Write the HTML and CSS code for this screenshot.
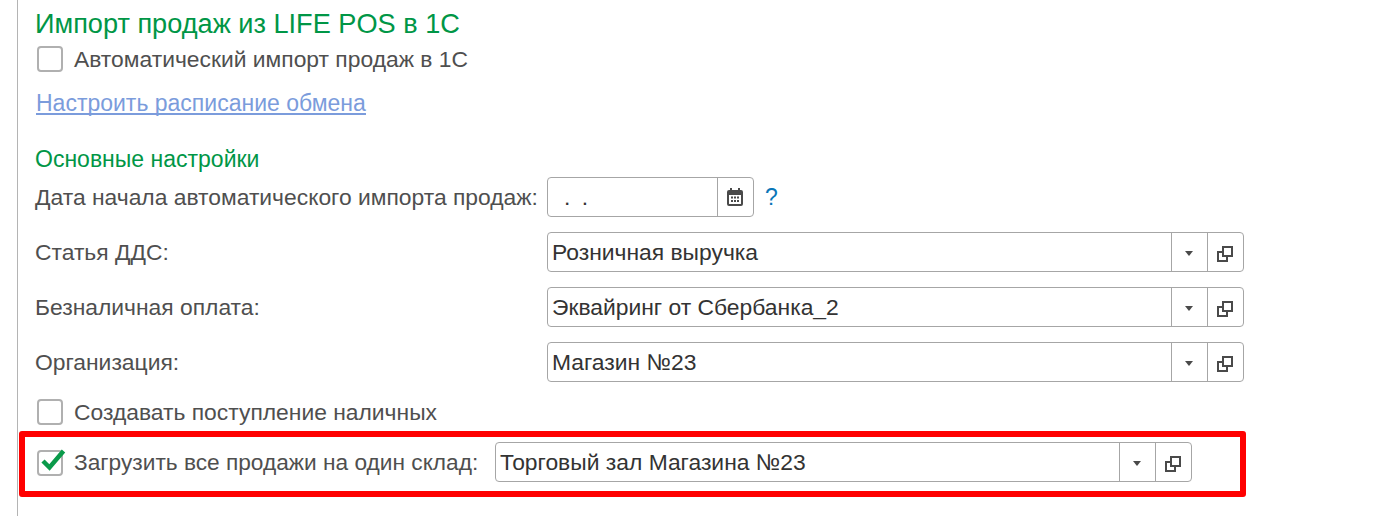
FILE: index.html
```html
<!DOCTYPE html>
<html lang="ru">
<head>
<meta charset="utf-8">
<title>Импорт продаж</title>
<link rel="stylesheet" href="styles.css">
</head>
<body>
<main class="form">
  <h1 class="title">Импорт продаж из LIFE POS в 1С</h1>
  <label class="check-row auto">
    <span class="box"></span>
    <span class="text">Автоматический импорт продаж в 1С</span>
  </label>
  <a class="link" href="#">Настроить расписание обмена</a>
  <h2 class="subtitle">Основные настройки</h2>

  <div class="row date-row">
    <span class="text">Дата начала автоматического импорта продаж:</span>
    <div class="field date-field">
      <span class="value date-value">. .</span>
      <span class="btn cal">
        <svg width="16" height="18" viewBox="0 0 16 18"><path fill="#4a4a4a" fill-rule="evenodd" d="M3 0h2v2h6V0h2v2h1a2 2 0 0 1 2 2v12a2 2 0 0 1-2 2H2a2 2 0 0 1-2-2V4a2 2 0 0 1 2-2h1zM2 7v8.500a.5.5 0 0 0 .5.5h11a.5.5 0 0 0 .5-.5V7z"/><path fill="#4a4a4a" d="M4 8.500h2v2H4zM7 8.500h2v2H7zM10 8.500h2v2h-2zM4 12h2v2H4zM7 12h2v2H7zM10 12h2v2h-2z"/></svg>
      </span>
    </div>
    <span class="help">?</span>
  </div>

  <div class="row">
    <span class="text">Статья ДДС:</span>
    <div class="field wide">
      <span class="value">Розничная выручка</span>
      <span class="btn"><span class="arrow"></span></span>
      <span class="btn open">
        <svg width="16" height="16" viewBox="0 0 16 16"><path fill="none" stroke="#4a4a4a" stroke-width="2" d="M6 1h9v9H6z"/><path fill="none" stroke="#4a4a4a" stroke-width="2" d="M6 6H1v9h9v-5"/></svg>
      </span>
    </div>
  </div>

  <div class="row">
    <span class="text">Безналичная оплата:</span>
    <div class="field wide">
      <span class="value">Эквайринг от Сбербанка_2</span>
      <span class="btn"><span class="arrow"></span></span>
      <span class="btn open">
        <svg width="16" height="16" viewBox="0 0 16 16"><path fill="none" stroke="#4a4a4a" stroke-width="2" d="M6 1h9v9H6z"/><path fill="none" stroke="#4a4a4a" stroke-width="2" d="M6 6H1v9h9v-5"/></svg>
      </span>
    </div>
  </div>

  <div class="row">
    <span class="text">Организация:</span>
    <div class="field wide">
      <span class="value">Магазин №23</span>
      <span class="btn"><span class="arrow"></span></span>
      <span class="btn open">
        <svg width="16" height="16" viewBox="0 0 16 16"><path fill="none" stroke="#4a4a4a" stroke-width="2" d="M6 1h9v9H6z"/><path fill="none" stroke="#4a4a4a" stroke-width="2" d="M6 6H1v9h9v-5"/></svg>
      </span>
    </div>
  </div>

  <label class="check-row cash">
    <span class="box"></span>
    <span class="text">Создавать поступление наличных</span>
  </label>

  <div class="highlight">
    <label class="check-row">
      <span class="box">
        <svg class="tick" width="26" height="22" viewBox="0 0 26 22"><path fill="none" stroke="#0a9a4a" stroke-width="4.500" d="M3 12l6.500 6.500L23.500 2"/></svg>
      </span>
      <span class="text">Загрузить все продажи на один склад:</span>
    </label>
    <div class="field wide store">
      <span class="value">Торговый зал Магазина №23</span>
      <span class="btn"><span class="arrow"></span></span>
      <span class="btn open">
        <svg width="16" height="16" viewBox="0 0 16 16"><path fill="none" stroke="#4a4a4a" stroke-width="2" d="M6 1h9v9H6z"/><path fill="none" stroke="#4a4a4a" stroke-width="2" d="M6 6H1v9h9v-5"/></svg>
      </span>
    </div>
  </div>
</main>
</body>
</html>
```
FILE: styles.css
```css
* { box-sizing: border-box; }
html, body { margin: 0; padding: 0; background: #fff; }
body {
  width: 1393px;
  height: 516px;
  overflow: hidden;
  font-family: "Liberation Sans", Arial, sans-serif;
  color: #4f4f4f;
  font-size: 22.85px;
}
.form {
  margin-left: 17px;
  height: 516px;
  border-left: 1px solid #b4b4b4;
  padding: 9px 0 0 17px;
  display: flex;
  flex-direction: column;
  align-items: flex-start;
}
.title {
  margin: 0;
  font-size: 27.15px;
  font-weight: 400;
  line-height: 30px;
  color: #009646;
}
.check-row { display: flex; align-items: center; }
.box {
  position: relative;
  width: 26px;
  height: 26px;
  margin-left: 2px;
  margin-right: 11px;
  border: 2px solid #b0b0b0;
  border-radius: 4px;
  flex: none;
  background: #fff;
}
.tick { position: absolute; left: 1px; top: -3px; }
.auto { margin-top: 7px; height: 26px; }
.link {
  margin: 17px 0 0 1px;
  font-size: 23px;
  line-height: 29px;
  color: #7b9cdc;
  text-decoration: none;
  border-bottom: 2px solid #7b9cdc;
  height: 26px;
}
.subtitle {
  margin: 31px 0 0;
  font-size: 23px;
  font-weight: 400;
  line-height: 26px;
  color: #009646;
}
.row {
  display: grid;
  grid-template-columns: 512px auto auto;
  align-items: center;
  margin-top: 15px;
  height: 40px;
}
.date-row { margin-top: 5px; }
.field {
  display: flex;
  align-items: stretch;
  height: 40px;
  border: 1px solid #a6a6a6;
  border-radius: 4px;
  background: #fff;
}
.date-field { width: 207px; }
.wide { width: 697px; }
.value {
  flex: 1;
  padding-left: 4px;
  line-height: 38px;
  color: #333;
  white-space: nowrap;
}
.date-value { padding-left: 16px; letter-spacing: 2.5px; }
.btn {
  width: 36px;
  flex: none;
  border-left: 1px solid #a6a6a6;
  display: flex;
  align-items: center;
  justify-content: center;
}
.arrow {
  width: 0;
  height: 0;
  border-left: 4px solid transparent;
  border-right: 4px solid transparent;
  border-top: 5px solid #4a4a4a;
  margin: 3px 1px 0 0;
}
.open svg { margin: 4px 0 0 -1px; }
.cal svg { margin-right: 1px; }
.help {
  margin-left: 11px;
  color: #0a76b8;
  font-size: 23px;
}
.cash { margin-top: 17px; height: 26px; }
.highlight {
  margin: 6px 0 0 -16px;
  width: 1227px;
  height: 66px;
  border: 6px solid #ff0000;
  border-radius: 3px;
  padding: 5px 0 0 10px;
  display: flex;
  align-items: flex-start;
}
.highlight .check-row { width: 460px; margin-top: 7px; }
.highlight .text { font-size: 22.7px; }
```
